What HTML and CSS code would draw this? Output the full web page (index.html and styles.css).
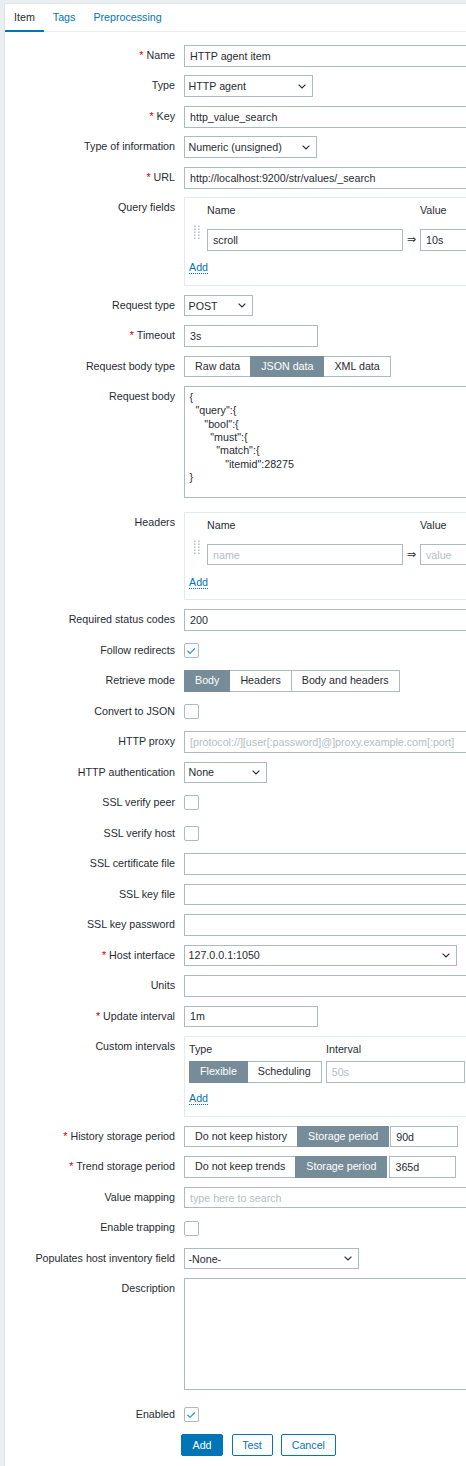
FILE: index.html
```html
<!DOCTYPE html>
<html lang="en">
<head>
<meta charset="utf-8">
<title>Item</title>
<link rel="stylesheet" href="styles.css">
</head>
<body>
<div class="panel">
  <nav class="tabs">
    <a class="tab active">Item</a>
    <a class="tab">Tags</a>
    <a class="tab">Preprocessing</a>
  </nav>
  <form class="form">
    <div class="row"><label class="lbl"><span class="req">*</span> Name</label><div class="ctl"><input class="inp w-wide" value="HTTP agent item"></div></div>
    <div class="row"><label class="lbl">Type</label><div class="ctl"><div class="sel w-type"><span>HTTP agent</span><svg class="chev" width="8" height="5" viewBox="0 0 8 5"><polyline points="0.6,0.6 4,4 7.4,0.6"/></svg></div></div></div>
    <div class="row"><label class="lbl"><span class="req">*</span> Key</label><div class="ctl"><input class="inp w-wide" value="http_value_search"></div></div>
    <div class="row"><label class="lbl">Type of information</label><div class="ctl"><div class="sel w-toi"><span>Numeric (unsigned)</span><svg class="chev" width="8" height="5" viewBox="0 0 8 5"><polyline points="0.6,0.6 4,4 7.4,0.6"/></svg></div></div></div>
    <div class="row"><label class="lbl"><span class="req">*</span> URL</label><div class="ctl"><input class="inp w-wide" value="http://localhost:9200/str/values/_search"></div></div>
    <div class="row"><label class="lbl">Query fields</label>
      <div class="ctl">
        <div class="box">
          <div class="kv-head"><span class="c-name">Name</span><span class="c-val">Value</span></div>
          <div class="kv-row">
            <svg class="handle" width="7" height="16" viewBox="0 0 7 16"><g><rect x="0.5" y="0.5" width="1.6" height="1.6"/><rect x="4.5" y="0.5" width="1.6" height="1.6"/><rect x="0.5" y="3.5" width="1.6" height="1.6"/><rect x="4.5" y="3.5" width="1.6" height="1.6"/><rect x="0.5" y="6.5" width="1.6" height="1.6"/><rect x="4.5" y="6.5" width="1.6" height="1.6"/><rect x="0.5" y="9.5" width="1.6" height="1.6"/><rect x="4.5" y="9.5" width="1.6" height="1.6"/><rect x="0.5" y="12.5" width="1.6" height="1.6"/><rect x="4.5" y="12.5" width="1.6" height="1.6"/></g></svg>
            <input class="inp w-kname" value="scroll">
            <span class="arrow">⇒</span>
            <input class="inp w-kval" value="10s">
          </div>
          <div class="add-line"><a class="link">Add</a></div>
        </div>
      </div>
    </div>
    <div class="row"><label class="lbl">Request type</label><div class="ctl"><div class="sel w-rt"><span>POST</span><svg class="chev" width="8" height="5" viewBox="0 0 8 5"><polyline points="0.6,0.6 4,4 7.4,0.6"/></svg></div></div></div>
    <div class="row"><label class="lbl"><span class="req">*</span> Timeout</label><div class="ctl"><input class="inp w-small" value="3s"></div></div>
    <div class="row"><label class="lbl">Request body type</label><div class="ctl"><div class="seg"><span class="sb">Raw data</span><span class="sb on">JSON data</span><span class="sb">XML data</span></div></div></div>
    <div class="row tall"><label class="lbl">Request body</label><div class="ctl"><textarea class="ta w-wide">{
  "query":{
     "bool":{
       "must":{
         "match":{
            "itemid":28275
}</textarea></div></div>
    <div class="row"><label class="lbl">Headers</label>
      <div class="ctl">
        <div class="box">
          <div class="kv-head"><span class="c-name">Name</span><span class="c-val">Value</span></div>
          <div class="kv-row">
            <svg class="handle" width="7" height="16" viewBox="0 0 7 16"><g><rect x="0.5" y="0.5" width="1.6" height="1.6"/><rect x="4.5" y="0.5" width="1.6" height="1.6"/><rect x="0.5" y="3.5" width="1.6" height="1.6"/><rect x="4.5" y="3.5" width="1.6" height="1.6"/><rect x="0.5" y="6.5" width="1.6" height="1.6"/><rect x="4.5" y="6.5" width="1.6" height="1.6"/><rect x="0.5" y="9.5" width="1.6" height="1.6"/><rect x="4.5" y="9.5" width="1.6" height="1.6"/><rect x="0.5" y="12.5" width="1.6" height="1.6"/><rect x="4.5" y="12.5" width="1.6" height="1.6"/></g></svg>
            <input class="inp w-kname" placeholder="name">
            <span class="arrow">⇒</span>
            <input class="inp w-kval" placeholder="value">
          </div>
          <div class="add-line"><a class="link">Add</a></div>
        </div>
      </div>
    </div>
    <div class="row"><label class="lbl">Required status codes</label><div class="ctl"><input class="inp w-wide" value="200"></div></div>
    <div class="row"><label class="lbl">Follow redirects</label><div class="ctl mid"><span class="cb"><svg width="13" height="13" viewBox="0 0 13 13"><polyline points="2.4,6.8 5,9.4 10,4.2"/></svg></span></div></div>
    <div class="row"><label class="lbl">Retrieve mode</label><div class="ctl"><div class="seg"><span class="sb on">Body</span><span class="sb">Headers</span><span class="sb">Body and headers</span></div></div></div>
    <div class="row"><label class="lbl">Convert to JSON</label><div class="ctl mid"><span class="cb"></span></div></div>
    <div class="row"><label class="lbl">HTTP proxy</label><div class="ctl"><input class="inp w-wide" placeholder="[protocol://][user[:password]@]proxy.example.com[:port]"></div></div>
    <div class="row"><label class="lbl">HTTP authentication</label><div class="ctl"><div class="sel w-auth"><span>None</span><svg class="chev" width="8" height="5" viewBox="0 0 8 5"><polyline points="0.6,0.6 4,4 7.4,0.6"/></svg></div></div></div>
    <div class="row"><label class="lbl">SSL verify peer</label><div class="ctl mid"><span class="cb"></span></div></div>
    <div class="row"><label class="lbl">SSL verify host</label><div class="ctl mid"><span class="cb"></span></div></div>
    <div class="row"><label class="lbl">SSL certificate file</label><div class="ctl"><input class="inp w-wide"></div></div>
    <div class="row"><label class="lbl">SSL key file</label><div class="ctl"><input class="inp w-wide"></div></div>
    <div class="row"><label class="lbl">SSL key password</label><div class="ctl"><input class="inp w-wide"></div></div>
    <div class="row"><label class="lbl"><span class="req">*</span> Host interface</label><div class="ctl"><div class="sel w-host"><span>127.0.0.1:1050</span><svg class="chev" width="8" height="5" viewBox="0 0 8 5"><polyline points="0.6,0.6 4,4 7.4,0.6"/></svg></div></div></div>
    <div class="row"><label class="lbl">Units</label><div class="ctl"><input class="inp w-wide"></div></div>
    <div class="row"><label class="lbl"><span class="req">*</span> Update interval</label><div class="ctl"><input class="inp w-small" value="1m"></div></div>
    <div class="row"><label class="lbl">Custom intervals</label>
      <div class="ctl">
        <div class="box box-ci">
          <div class="ci-head"><span class="c-type">Type</span><span>Interval</span></div>
          <div class="ci-row">
            <div class="seg"><span class="sb on">Flexible</span><span class="sb">Scheduling</span></div>
            <input class="inp w-int" placeholder="50s">
          </div>
          <div class="add-line ci-add"><a class="link">Add</a></div>
        </div>
      </div>
    </div>
    <div class="row"><label class="lbl"><span class="req">*</span> History storage period</label><div class="ctl"><div class="seg-line"><div class="seg"><span class="sb">Do not keep history</span><span class="sb on">Storage period</span></div><input class="inp w-per" value="90d"></div></div></div>
    <div class="row"><label class="lbl"><span class="req">*</span> Trend storage period</label><div class="ctl"><div class="seg-line"><div class="seg"><span class="sb">Do not keep trends</span><span class="sb on">Storage period</span></div><input class="inp w-per2" value="365d"></div></div></div>
    <div class="row"><label class="lbl">Value mapping</label><div class="ctl"><input class="inp w-wide" placeholder="type here to search"></div></div>
    <div class="row"><label class="lbl">Enable trapping</label><div class="ctl mid"><span class="cb"></span></div></div>
    <div class="row"><label class="lbl">Populates host inventory field</label><div class="ctl"><div class="sel w-inv"><span>-None-</span><svg class="chev" width="8" height="5" viewBox="0 0 8 5"><polyline points="0.6,0.6 4,4 7.4,0.6"/></svg></div></div></div>
    <div class="row tall"><label class="lbl">Description</label><div class="ctl"><textarea class="ta w-wide"></textarea></div></div>
    <div class="row"><label class="lbl">Enabled</label><div class="ctl mid"><span class="cb"><svg width="13" height="13" viewBox="0 0 13 13"><polyline points="2.4,6.8 5,9.4 10,4.2"/></svg></span></div></div>
    <div class="actions">
      <button type="button" class="btn primary">Add</button>
      <button type="button" class="btn alt">Test</button>
      <button type="button" class="btn alt">Cancel</button>
    </div>
  </form>
</div>
</body>
</html>
```

FILE: styles.css
```css
html, body {
  margin: 0;
  padding: 0;
  overflow: hidden;
}
body {
  width: 466px;
  height: 1466px;
  background: #ebeef0;
  font-family: "Liberation Sans", Arial, sans-serif;
  font-size: 10.7px;
  color: #1f2c33;
}
.panel {
  margin: 3px 0 0 4px;
  width: 720px;
  height: 1480px;
  background: #fff;
  border: 1px solid #dfe4e7;
  border-right: none;
}

/* tabs */
.tabs {
  display: flex;
  height: 27px;
  border-bottom: 1px solid #ebeef0;
}
.tab {
  box-sizing: border-box;
  height: 28px;
  padding: 0 9px;
  line-height: 26px;
  border-bottom: 2px solid transparent;
  color: #0275b8;
  cursor: pointer;
}
.tab.active {
  color: #1f2c33;
  border-bottom-color: #0275b8;
}

/* form */
.form {
  display: flex;
  flex-direction: column;
  gap: 8.9px;
  padding-top: 13px;
  margin: 0;
}
.row {
  display: flex;
  align-items: flex-start;
  gap: 9px;
}
.row.tall {
  margin-bottom: 4.5px;
}
.lbl {
  flex: none;
  width: 170px;
  text-align: right;
  line-height: 21.6px;
  white-space: nowrap;
}
.req {
  color: #d40000;
}
.ctl {
  flex: none;
}
.ctl.mid {
  height: 21.6px;
  display: flex;
  align-items: center;
}

/* inputs */
.inp {
  box-sizing: border-box;
  display: block;
  height: 21.6px;
  margin: 0;
  padding: 0 5px;
  border: 1px solid #acbbc2;
  border-radius: 0;
  background: #fff;
  font: inherit;
  color: #1f2c33;
  outline: none;
}
.inp::placeholder {
  color: #b2bec4;
  opacity: 1;
}
.w-wide { width: 408px; }
.w-small { width: 134px; }
.w-kname { width: 196px; }
.w-kval { width: 160px; }
.w-int { width: 139px; }
.w-per { width: 68px; margin-left: 1px; }
.w-per2 { width: 67px; margin-left: 2px; }

.sel {
  box-sizing: border-box;
  height: 21.6px;
  display: flex;
  align-items: center;
  justify-content: space-between;
  padding: 0 6px 0 3.5px;
  border: 1px solid #acbbc2;
  background: #fff;
  white-space: nowrap;
}
.chev {
  flex: none;
  fill: none;
  stroke: #1f2c33;
  stroke-width: 1.1;
}
.w-type { width: 129px; }
.w-toi { width: 133px; }
.w-rt { width: 69px; }
.w-auth { width: 83px; }
.w-host { width: 273px; }
.w-inv { width: 175px; }

.ta {
  box-sizing: border-box;
  display: block;
  height: 112px;
  margin: 0;
  padding: 3.6px 4.5px;
  border: 1px solid #acbbc2;
  border-radius: 0;
  font: inherit;
  line-height: 13.33px;
  color: #1f2c33;
  resize: none;
  outline: none;
  white-space: pre;
  overflow: hidden;
}

/* segmented */
.seg {
  display: flex;
}
.sb {
  box-sizing: border-box;
  height: 21.6px;
  line-height: 19.6px;
  padding: 0 10px;
  border: 1px solid #acbbc2;
  margin-left: -1px;
  background: #fff;
  color: #1f2c33;
  white-space: nowrap;
}
.sb:first-child {
  margin-left: 0;
}
.sb.on {
  background: #768d99;
  border-color: #768d99;
  color: #fff;
  position: relative;
}
.seg-line {
  display: flex;
}

/* checkbox */
.cb {
  box-sizing: border-box;
  width: 15px;
  height: 15px;
  border: 1px solid #acbbc2;
  border-radius: 2px;
  background: #fff;
  display: flex;
  align-items: center;
  justify-content: center;
}
.cb svg {
  fill: none;
  stroke: #3e95cf;
  stroke-width: 1.3;
}

/* key/value boxes */
.box {
  box-sizing: border-box;
  width: 408px;
  border: 1px solid #e4e9eb;
  padding: 0 5px 6px 4px;
}
.kv-head {
  display: flex;
  height: 24px;
  line-height: 24px;
  padding-left: 18px;
}
.c-name { width: 213px; }
.kv-row {
  display: flex;
  align-items: flex-start;
  margin-top: 7px;
}
.handle {
  flex: none;
  width: 18px;
  margin-top: -4px;
  margin-left: -1px;
  margin-right: 1px;
  fill: #b7c3c9;
}
.arrow {
  flex: none;
  width: 17px;
  text-align: center;
  line-height: 21.6px;
  font-size: 10.7px;
}
.add-line {
  margin-top: 6.4px;
  line-height: 21.6px;
}
.link {
  color: #0275b8;
  border-bottom: 1px dotted #0275b8;
  cursor: pointer;
}
.box-ci {
  padding-bottom: 5.9px;
}
.ci-head {
  display: flex;
  height: 24px;
  line-height: 24px;
}
.c-type { width: 137px; }
.ci-row {
  display: flex;
  gap: 4px;
}
.ci-add {
  margin-top: 5.9px;
}

/* actions */
.actions {
  display: flex;
  gap: 8.5px;
  padding-left: 176px;
}
.btn {
  box-sizing: border-box;
  height: 21.6px;
  margin: 0;
  padding: 0 9.7px;
  border: 1px solid #0275b8;
  border-radius: 2px;
  font: inherit;
  cursor: pointer;
}
.btn.primary {
  background: #0275b8;
  color: #fff;
  padding: 0 10.5px;
}
.btn.alt {
  background: #fff;
  color: #0275b8;
}
```
